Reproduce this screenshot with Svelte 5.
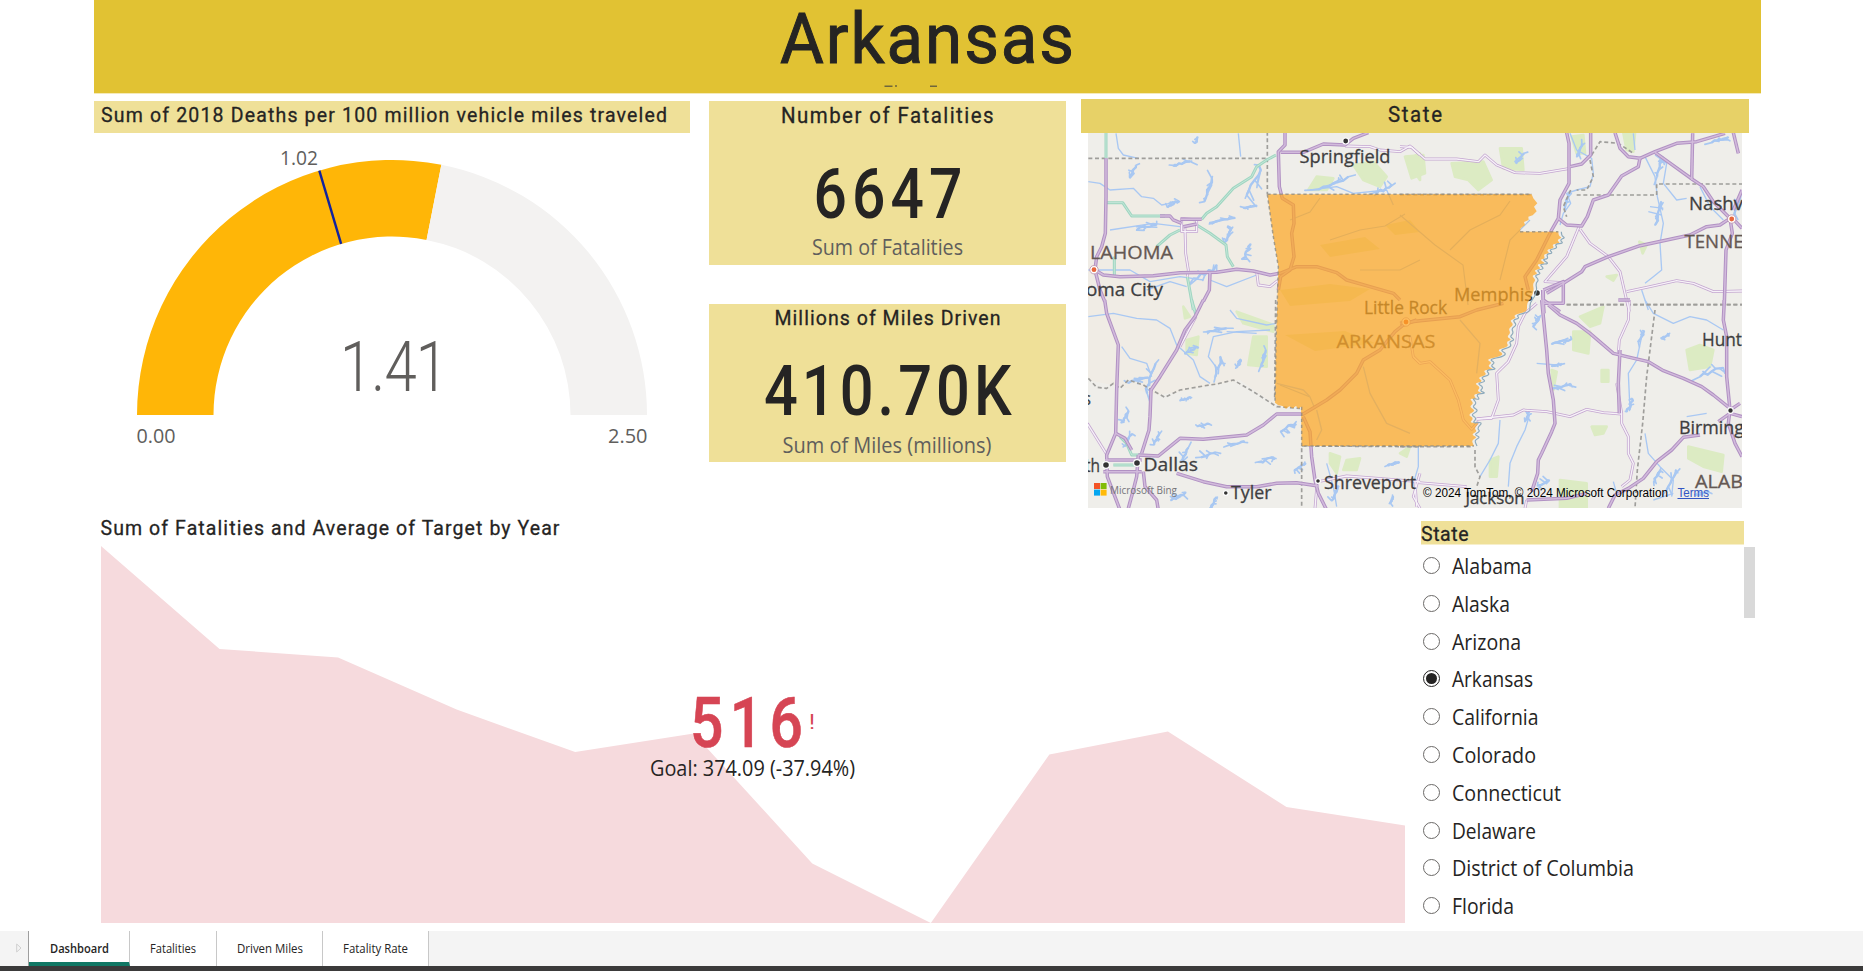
<script>
  const states = ['Alabama', 'Alaska', 'Arizona', 'Arkansas', 'California', 'Colorado', 'Connecticut', 'Delaware', 'District of Columbia', 'Florida'];
  const widths = [80, 58, 69, 81, 86.5, 84, 109, 84, 182, 62];
  let selected = $state('Arkansas');

  const tabs = [
    { name: 'Dashboard', w: 101, text: 59 },
    { name: 'Fatalities', w: 87, text: 46 },
    { name: 'Driven Miles', w: 106, text: 66 },
    { name: 'Fatality Rate', w: 106, text: 65 }
  ];
  let active = $state('Dashboard');

  // Gauge geometry
  const cx = 392, cy = 415, R = 255, r = 178.5;
  const polar = (v, rad) => {
    const a = Math.PI * (1 - v / 2.5);
    return [cx + rad * Math.cos(a), cy - rad * Math.sin(a)];
  };
  const arc = (a, b) =>
    `M${polar(a, R)} A${R} ${R} 0 0 1 ${polar(b, R)} L${polar(b, r)} A${r} ${r} 0 0 0 ${polar(a, r)}Z`;
  const t0 = polar(1.02, R), t1 = polar(1.02, r);

  // Trend area
  const ys = [546, 649, 657.5, 709.5, 752, 733.5, 863.5, 923, 754.5, 731.5, 807, 825.5];
  const area = 'M101 923 L' + ys.map((y, i) => `${101 + (i * 1304) / 11} ${y}`).join(' L') + ' L1405 923Z';

  // Map tiles: each holds its own strokes, in thirds of a pixel from its origin
  const tiles = [
    {
      x: 1070, y: 90,
      major: [
        'M108 205L108 320 106 430 95 470 80 500 75 540 90 600 104 634', 'M645 120L645 165 625 185 628 290 637 325 670 345 672 400 665 430 672 500 660 540 632 560 625 600',
        'M75 540L100 555 150 560 250 557 330 548 440 547 500 538 550 543 600 555 630 550 680 530 740 530 800 548 830 570 900 590 970 610 990 630',
        'M420 548L418 600 400 634', 'M632 187L700 187 760 162 825 165 850 145 895 128', 'M270 378L300 378 310 390 335 400', 'M332 388L395 388M340 410L380 402'
      ],
      minor: ['M345 415L347 490 355 540 352 560', 'M560 545L565 585 600 590 625 570', 'M825 168L900 170 930 180 990 185 1020 168 1050 195', 'M335 385L335 425 380 425 380 390Z'],
      teal: ['M108 125L108 205', 'M106 338L158 338 185 378 285 378', 'M395 388L410 370 440 350 490 295 545 260 560 230 590 210 618 195', 'M380 405L420 430 468 465 472 500 490 530', 'M330 420L300 435 260 470', 'M133 500L133 560', 'M352 560L370 660'],
      water: ['M138 130L145 175 160 195 205 205', 'M55 275L90 280 120 300 190 295 215 320 250 325 275 345 300 340', 'M505 130L512 200', 'M55 540L180 540 240 575 330 560 400 570', 'M720 300L800 290 850 310 950 300 970 345', 'M120 420L250 400 330 410', 'M420 570L470 590 560 555', 'M230 600L300 575 350 590'],
      border: ['M55 205L592 205M592 125L592 313'],
      green: ['M850 225L910 215 950 260 930 290 880 270Z', 'M740 260L790 265 770 300 715 300Z', 'M1010 210L1050 190 1050 270Z'],
      lakes: [[190, 245, 34, 38], [415, 300, 34, 70], [555, 270, 60, 90], [460, 390, 70, 30], [475, 435, 30, 45], [530, 485, 40, 45], [405, 550, 70, 60], [790, 280, 90, 50], [335, 220, 50, 22], [230, 410, 60, 26], [310, 340, 36, 28], [940, 300, 50, 40], [540, 350, 40, 14], [380, 150, 16, 18]]
    },
    {
      x: 1400, y: 90,
      major: [
        'M500 128L507 160 507 280 480 330 475 385 455 420 410 510 375 560 385 600', 'M475 385L500 405 545 408 562 380 580 330 625 315 665 258 715 230 720 205 685 200 660 175 645 128',
        'M720 205L765 185 830 160 890 155 975 130', 'M765 187L880 270 910 290 940 335 990 385', 'M878 130L875 270', 'M990 385L960 405 920 410 870 435 790 452 720 467 625 500 555 530 545 545 490 580 440 610',
        'M990 385L997 430 978 480 973 640', 'M572 128L572 195 545 222 510 230', 'M1000 128L1015 190', 'M430 600L490 575 490 640 430 640 430 600', 'M428 600L432 670', 'M430 630L480 665', 'M998 385L1026 415M1000 360L1026 300'
      ],
      minor: ['M0 170L35 172 75 207 170 207 235 215 255 195 290 225 345 248 420 250 510 235', 'M537 410L500 500 435 575 490 578', 'M540 418L570 460 625 500 660 545 675 610 688 665', 'M680 605L750 590 830 572 880 580 940 605 1026 603'],
      teal: [],
      water: ['M510 130L530 180 575 205 580 250 570 290 530 300 500 310 512 340 490 370 480 405', 'M735 200L765 260 772 320 790 400 780 460 785 540 760 560 735 580', 'M765 195L800 220 790 280 830 330 860 325', 'M900 290L930 350 970 390', 'M700 130L705 180', 'M750 350L790 355M745 365L785 375', 'M725 600L745 660'],
      border: ['M0 314L395 314', 'M530 315L770 315 770 282 1026 282', 'M500 644L1026 644', 'M575 195L600 155 655 160 700 190M570 210L580 260 560 300 530 300M512 300L490 350 500 380'],
      green: ['M155 220L250 215 275 270 235 300 205 270 165 260Z', 'M300 175L365 175 370 240 310 235Z', 'M15 200L70 195 75 250 35 265Z', 'M515 140L550 135 555 190 530 190Z', 'M670 128L705 128 700 185 680 180Z', 'M718 455L740 465 728 490Z', 'M620 560L650 555 640 572Z'],
      lakes: [[780, 230, 36, 60], [775, 370, 34, 70], [360, 205, 30, 30], [960, 150, 50, 20], [1010, 360, 30, 60], [540, 180, 24, 40], [500, 330, 24, 50]]
    },
    {
      x: 1070, y: 300,
      major: [
        'M104 0L110 40 145 135 140 270 137 400 110 465 112 530 150 630', 'M400 0L375 50 345 90 320 150 270 230 243 270 240 350 237 390 215 460', 'M137 400L165 415 185 450', 'M205 465L265 468 330 415 400 418 530 405 580 375 620 342 700 342 770 300 810 270 860 220 880 180 930 150 975 95 1000 75',
        'M700 350L720 395 725 470 735 540 745 580 770 630', 'M320 520L400 545 470 560 560 560 620 550 680 548 745 558', 'M100 515L215 515 M105 480L215 480', 'M205 465L200 530 190 570 175 625 M220 515L225 560 260 600 265 630', 'M1000 75L1040 60'
      ],
      minor: ['M52 370L108 460', 'M378 50L330 140', 'M740 565L735 625', 'M1050 520L1030 590 1050 625', 'M745 545L830 528 1050 545', 'M1020 110L1030 170 1050 190'],
      teal: ['M365 0L378 45', 'M130 495L195 495', 'M150 410L170 430 185 465 215 465'],
      water: ['M55 50L130 40 200 55 260 60 300 85 320 135 370 180 390 230 420 250', 'M155 140L180 175 230 190 245 230', 'M480 30L500 55 590 75 620 70', 'M600 90L500 95 430 110 415 170 445 210', 'M740 330L755 390 740 420', 'M880 200L900 280 950 370 1020 400', 'M620 250L700 270 720 290', 'M770 490L790 560 800 620', 'M560 100L470 95'],
      border: ['M55 235L80 262 110 265 130 250 150 265 175 240 220 255 245 270 285 292 330 270 400 258 440 252 490 240 550 275 620 320 690 325', 'M695 438L1050 440', 'M695 445L695 625', 'M617 0L614 300'],
      green: ['M500 35L610 75 610 95 520 70Z', 'M550 110L590 110 590 200 535 195Z', 'M350 120L385 110 380 165 350 160Z', 'M780 460L810 470 800 520 780 490Z', 'M830 480L870 475 860 510 820 510Z', 'M990 460L1020 440 1010 470Z', 'M340 20L360 50 345 55Z'],
      lakes: [[240, 235, 40, 90], [440, 90, 60, 16], [365, 150, 40, 30], [445, 200, 30, 60], [507, 190, 18, 24], [345, 297, 30, 16], [167, 350, 36, 36], [400, 375, 34, 16], [345, 463, 34, 40], [415, 465, 44, 36], [175, 420, 34, 36], [260, 418, 26, 34], [500, 430, 46, 16], [592, 478, 40, 28], [655, 380, 46, 36], [690, 500, 34, 26], [430, 610, 34, 36], [325, 590, 44, 32], [970, 490, 36, 16], [795, 580, 30, 44], [580, 175, 20, 50], [205, 240, 60, 24], [965, 600, 16, 20]]
    },
    {
      x: 1400, y: 300,
      major: [
        'M425 0L430 50 440 150 445 220 460 300 465 370 455 395 425 460 415 480 413 520 395 575', 'M445 15L480 45 530 70 570 100 640 160 680 170 745 185 790 212 850 235 905 260 940 285 990 325', 'M973 0L970 60 980 110 980 230 990 330 1020 310', 'M655 0L690 0', 'M660 150L655 250 658 340', 'M990 330L985 370 1005 430 1026 470', 'M900 405L850 412 815 450 770 485 730 535 685 565 645 585 625 625', 'M990 340L955 365M990 340L1026 350', 'M380 600L500 595 560 580', 'M0 70L60 62 180 50 230 30 310 10'
      ],
      minor: ['M410 10L375 40 355 80 350 130 325 185 290 220 295 300 275 355 230 357', 'M688 0L685 60 658 120 655 160', 'M230 357L340 345 370 330 440 335 510 350 560 328 610 338 665 342', 'M650 250L665 340 665 370 685 410 685 460 700 490 690 540 665 560', 'M40 170L60 190 90 185 150 240 175 300 190 360 215 388 235 365', 'M55 548L200 560M45 545L50 620', 'M380 600L375 625'],
      teal: [],
      water: ['M735 0L760 40 820 70 870 50 920 60 970 90', 'M725 110L710 180 685 220 690 330', 'M300 360L295 430 270 480 240 530', 'M390 340L375 390 350 440 330 490 325 560', 'M735 400L745 460 780 500 820 540 815 590', 'M180 60L240 130 230 220', 'M470 195L410 190', 'M920 340L860 350', 'M55 440L55 500 40 550', 'M640 545L650 580', 'M760 600L820 580'],
      border: ['M500 14L1026 14', 'M765 30L740 230 728 370 712 510 705 625', 'M0 440L215 440', 'M225 450L225 500 240 530 230 560'],
      green: ['M520 95L570 95 565 160 520 150Z', 'M540 50L610 20 600 70 570 80Z', 'M860 150L900 135 940 150 930 200 870 210Z', 'M865 440L970 465 965 515 910 500 865 475Z', 'M575 380L620 380 610 400 585 405Z', 'M270 480L295 470 290 530 270 530Z', 'M480 540L560 550 560 625 480 625Z', 'M605 210L625 210 625 245 605 245Z', 'M455 210L470 215 460 270Z'],
      lakes: [[485, 125, 60, 26], [485, 260, 54, 20], [410, 65, 30, 30], [725, 110, 24, 34], [690, 315, 30, 40], [935, 215, 70, 46], [470, 195, 30, 12], [430, 550, 36, 30], [795, 110, 24, 20], [815, 540, 40, 60], [910, 580, 34, 18], [770, 530, 34, 34], [380, 350, 24, 30]]
    }
  ];

  // A reservoir: a wandering spine with short side arms
  const lake = ([x, y, w, h]) => {
    let seed = x * 7 + y * 13;
    const rnd = () => {
      seed = (seed * 9301 + 49297) % 233280;
      return seed / 233280 - 0.5;
    };
    let d = '';
    let arms = '';
    for (let i = 0; i < 7; i++) {
      const f = i / 6 - 0.5;
      const px = w > h ? x + f * w : x - f * w * 0.6 + rnd() * w * 0.25;
      const py = w > h ? y - f * h * 0.6 + rnd() * h * 0.25 : y + f * h;
      d += (i ? 'L' : 'M') + px.toFixed(1) + ' ' + py.toFixed(1);
      arms += `M${px.toFixed(1)} ${py.toFixed(1)}l${(rnd() * w * 0.9).toFixed(1)} ${(rnd() * h * 0.9).toFixed(1)}`;
    }
    return [d, arms];
  };

  // Smooths small wiggles by running a curve through segment midpoints
  const wiggle = (pts) => {
    let d = '';
    for (let i = 0; i < pts.length - 1; i++) {
      const [a, b] = pts[i], [c, e] = pts[i + 1];
      d += `Q${a} ${b} ${(a + c) / 2} ${(b + e) / 2}`;
    }
    return d + 'L' + pts[pts.length - 1].join(' ');
  };

  const eastBank = [
    [395, 313], [400, 325], [412, 340], [402, 350], [410, 364], [398, 376], [385, 380], [386, 390], [372, 396], [375, 405], [362, 415], [360, 425],
    [475, 425], [475, 437], [487, 443], [470, 450], [482, 460], [455, 462], [464, 475], [438, 479], [450, 490], [430, 492], [436, 507], [417, 508], [440, 522], [408, 522], [425, 537], [400, 540], [415, 552], [394, 556], [408, 570], [398, 580], [402, 600], [395, 620], [380, 640],
    [382, 660], [372, 668], [340, 675], [350, 685], [328, 690], [342, 705], [325, 715], [332, 730], [320, 740], [336, 750], [318, 755], [327, 770], [290, 780], [310, 790], [300, 800], [258, 808], [277, 818], [262, 828], [282, 838], [248, 840], [262, 855], [232, 862], [250, 875], [222, 880], [242, 892], [230, 903], [250, 910], [218, 912], [232, 930], [207, 924], [222, 940], [207, 950], [228, 962], [203, 974], [222, 985], [207, 1000], [240, 996], [222, 1015], [232, 1024], [213, 1034], [233, 1042], [214, 1050], [222, 1068]
  ].map(([a, b]) => [a + 990, b]);
  const bootheel = eastBank.slice(0, 13).map((p) => p.join(' ')).join('L');
  const river = wiggle(eastBank.slice(13));
  const stateShape = 'M592 313L' + bootheel + river +
    'L695 1068L693 950L685 956L678 948L668 955L658 949L648 956L638 948L625 946L615 938L618 760L622 630L625 530L610 440Z';

  const places = [
    ['Springfield', 1299.5, 91, 163.3, 18.5], ['LAHOMA', 1090, 83, 259, 18.5, 'region'], ['oma City', 1086, 77, 295.7, 18.5],
    ['Nashv', 1689, 54, 210, 18.5], ['TENNE', 1684.5, 59, 248, 18.5, 'region'], ['Little Rock', 1364, 83, 314, 17.5],
    ['ARKANSAS', 1336.5, 99, 348, 18.5, 'region'], ['Memphis', 1454, 79, 301, 18.5], ['Dallas', 1143.5, 54.5, 471.2, 18.5],
    ['Tyler', 1231, 40.5, 499.2, 18.5], ['Shreveport', 1324, 92, 488.5, 18.5], ['th', 1085, 15, 472, 18.5],
    ['Hunt', 1702, 40, 345.7, 18.5], ['Birming', 1679, 65, 434, 18.5], ['ALAB', 1695, 48, 488, 18.5, 'region'],
    ['Jackson', 1465.5, 59, 504.3, 17], ['s', 1083, 8, 405, 18.5]
  ];
  const dots = [[1345.7, 141, 3], [1537, 293, 3.4], [1137, 463, 3.4], [1106, 465, 3.4], [1225.8, 493, 2.4], [1318, 481, 2.4], [1730.5, 410.5, 2.8]];
</script>

{#snippet label(text, x, w, y, size, cls)}
  <text {x} {y} textLength={w} lengthAdjust="spacingAndGlyphs" font-size={size} class={cls}>{text}</text>
{/snippet}

<!-- Narrow glyphs with open tracking, for headings and figures -->
{#snippet narrow(text, x, w, y, size, cls, k)}
  <text transform="translate({x} {y}) scale({k} 1)" textLength={w / k} lengthAdjust="spacing" font-size={size} class={cls}>{text}</text>
{/snippet}

{#snippet line(text, w, size, cls)}
  <svg class="line" width={w} height="26">{@render label(text, 0, w, 20, size, cls)}</svg>
{/snippet}

{#snippet heading(text, w, size)}
  <svg class="line" width={w} height="26">{@render narrow(text, 0, w, 20, size, 'din ink head', 0.93)}</svg>
{/snippet}

<div class="page">
  <main>
    <header>
      <svg width="1667" height="93" viewBox="94 0 1667 93">
        {@render narrow('Arkansas', 780, 294, 63, 70, 'din ink title', 0.96)}
        <path d="M884.5 86.3h8M895 86h2M930 86.3h7" stroke="#6f663c" stroke-width="1.4" />
      </svg>
    </header>

    <section class="top">
      <article class="gauge">
        <h2>{@render heading('Sum of 2018 Deaths per 100 million vehicle miles traveled', 566, 21)}</h2>
        <svg width="596" height="375" viewBox="94 133 596 375">
          <path d={arc(0, 1.405)} fill="#ffb607" />
          <path d={arc(1.405, 2.5)} fill="#f3f2f1" />
          <line x1={t0[0]} y1={t0[1]} x2={t1[0]} y2={t1[1]} stroke="#12239e" stroke-width="2.4" />
          {@render label('1.02', 280, 38, 165, 20.5, 'ui grey')}
          {@render label('0.00', 136.5, 39, 442.5, 20.5, 'ui grey')}
          {@render label('2.50', 608, 39.5, 442.5, 20.5, 'ui grey')}
          {@render narrow('1.41', 340, 108, 391, 70, 'din grey light', 0.83)}
        </svg>
      </article>

      <div class="cards">
        <article class="card">
          <svg width="357" height="164" viewBox="709 101 357 164">
            {@render narrow('Number of Fatalities', 781, 212.5, 122.7, 22, 'din ink head', 0.93)}
            {@render narrow('6647', 813.5, 149, 218, 70, 'din ink medium', 0.84)}
            {@render label('Sum of Fatalities', 812, 151, 255, 21, 'ui grey')}
          </svg>
        </article>
        <article class="card">
          <svg width="357" height="158" viewBox="709 304 357 158">
            {@render narrow('Millions of Miles Driven', 774.5, 226, 325, 21, 'din ink head', 0.93)}
            {@render narrow('410.70K', 764, 247.5, 415, 70, 'din ink medium', 0.85)}
            {@render label('Sum of Miles (millions)', 782.5, 209, 453, 21, 'ui grey')}
          </svg>
        </article>
      </div>

      <article class="map">
        <h2>{@render heading('State', 54, 22)}</h2>
        <svg class="canvas" width="654" height="375" viewBox="1088 133 654 375">
          <rect x="1088" y="133" width="654" height="375" fill="#efeeea" />
          <path d="M1088 160H1266L1278 300 1275 405 1240 380 1160 395 1088 380Z" fill="#f0ece5" />
          {#snippet layer(key, stroke, width, dash)}
            {#each tiles as t}
              <g transform="translate({t.x} {t.y}) scale(.33333)" fill="none" {stroke} stroke-width={width} stroke-dasharray={dash} stroke-linejoin="round">
                {#each t[key] as d}<path {d} />{/each}
              </g>
            {/each}
          {/snippet}
          {#each tiles as t}
            <g transform="translate({t.x} {t.y}) scale(.33333)">
              {#each t.green as d}<path {d} fill="#dcebc3" stroke="#dcebc3" stroke-width="8" stroke-linejoin="round" />{/each}
              {#each t.lakes as l}
                {@const [spine, arms] = lake(l)}
                <path d={spine} fill="none" stroke="#a6c6f2" stroke-width="7" stroke-linejoin="round" />
                <path d={arms} fill="none" stroke="#a9c8f2" stroke-width="5" stroke-linecap="round" />
              {/each}
            </g>
          {/each}
          <path d="M1280 290l50-6 40 5-20 12-60 5zM1285 335l60-4 30 12-60 8zM1320 245l45-8 15 12-50 8zM1385 225l25-5 10 12-25 3z" fill="#dfe5bf" />
          <path d="M1330 240l30-10 25-4 20-12M1290 220l20-8 10-14M1450 250l20-20 30-15 10-14M1400 215l35 30 28 20 5 40M1420 260l-20 10-40 0M1500 280l10-40 20-20M1280 385l30 12 5 12" fill="none" stroke="#a9c4e4" stroke-width="1.2" />
          {@render layer('water', '#a9c8f3', 4, '')}
          {@render layer('border', '#9f9e9b', 5, '12 8')}
          {@render layer('teal', '#9fd6c1', 9, '')}
          {@render layer('teal', '#c6e6da', 3, '')}
          {@render layer('minor', '#c3a5d0', 8.5, '')}
          {@render layer('minor', '#f7f2f8', 4, '')}
          {@render layer('major', '#b191c3', 10.5, '')}
          {@render layer('major', '#d2bbdc', 4.5, '')}

          {#each places as [name, x, w, y, size, kind]}
            {@render label(name, x, w, y, size, `place ${kind ?? ''}`)}
          {/each}
          {#each dots as [x, y, rad]}
            <circle cx={x} cy={y} r={rad} fill="#333" stroke="#fff" stroke-width="1.2" />
          {/each}
          {#each [[1094, 269.7], [1731.7, 219], [1406, 322]] as [x, y]}
            <circle cx={x} cy={y} r="4.2" fill="#fff" stroke="#b98fa8" stroke-width=".8" />
            <circle cx={x} cy={y} r="2.4" fill="#e8663c" />
          {/each}
          <path d={stateShape} transform="translate(1070 90) scale(.33333)" fill="#fda51f" fill-opacity=".7" />
          <path d="M592 313H1385M1350 425H1465M592 313L610 440 625 530 622 630 618 760 615 938M695 950V1068H1212" transform="translate(1070 90) scale(.33333)" fill="none" stroke="#948d80" stroke-opacity=".8" stroke-width="4.5" stroke-dasharray="10 8" />
          <path d={'M1465 425' + river} transform="translate(1073 90) scale(.33333)" fill="none" stroke="#8eaabb" stroke-width="3.5" />

          <path d="M1094 483h6v6h-6z" fill="#f35325" />
          <path d="M1100.6 483h6v6h-6z" fill="#81bc06" />
          <path d="M1094 489.6h6v6h-6z" fill="#05a6f0" />
          <path d="M1100.6 489.6h6v6h-6z" fill="#ffba08" />
          {@render label('Microsoft Bing', 1110, 67, 493.8, 11.5, 'bing')}
          {@render label('© 2024 TomTom, © 2024 Microsoft Corporation', 1423, 245, 496.7, 12, 'legal')}
          {@render label('Terms', 1677.5, 31.5, 496.7, 12, 'legal link')}
          <path d="M1677.5 498.5h31.5" stroke="#3456c4" />
        </svg>
      </article>
    </section>

    <section class="bottom">
      <svg width="1327" height="423" viewBox="94 508 1327 423">
        <path d={area} fill="#f6dadd" />
        {@render narrow('Sum of Fatalities and Average of Target by Year', 100.5, 459, 535, 21, 'din ink head', 0.93)}
        {@render narrow('516', 690, 113, 747, 70, 'din alert', 0.84)}
        {@render label('!', 809, 6, 729, 21, 'din alert thin')}
        {@render label('Goal: 374.09 (-37.94%)', 650, 205, 776, 21, 'ui ink')}
      </svg>
      <aside>
        <h3>{@render heading('State', 47.5, 21)}</h3>
        <div class="list">
          <ul>
            {#each states as s, i}
              <li>
                <button role="radio" aria-checked={s === selected} onclick={() => (selected = s)}>
                  <span class="radio" class:on={s === selected}></span>
                  {@render line(s, widths[i], 21, 'ui ink')}
                </button>
              </li>
            {/each}
          </ul>
          <div class="thumb"></div>
        </div>
      </aside>
    </section>
  </main>

  <nav>
    <div class="scroll">
      <svg width="6" height="10" viewBox="0 0 6 10"><path d="M.7 1v8l4.3-4z" fill="none" stroke="#cfcfcf" /></svg>
    </div>
    {#each tabs as t}
      <button class="tab" class:active={t.name === active} style="width:{t.w}px" onclick={() => (active = t.name)}>
        {@render line(t.name, t.text, 12, t.name === active ? 'ui ink bold' : 'ui ink')}
      </button>
    {/each}
  </nav>
  <footer></footer>
</div>

<style>
  :global(body) { margin: 0; background: #fff; overflow: hidden; }
  .page { width: 1863px; height: 971px; display: flex; flex-direction: column; font-family: 'Open Sans', sans-serif; }
  main { height: 931px; width: 1667px; margin-left: 94px; }
  svg { display: block; }
  h2, h3, ul { margin: 0; padding: 0; font-weight: 400; list-style: none; }
  button { border: 0; background: none; padding: 0; font: inherit; }
  header { height: 93px; background: #e1c233; box-shadow: 0 1px #f5eab9; }
  .line { overflow: visible; flex: none; }
  .din { font-family: Roboto, sans-serif; }
  .ui { font-family: 'Open Sans', sans-serif; }
  .ink { fill: #252423; }
  .grey { fill: #605e5c; }
  .alert { fill: #d64554; font-weight: 500; stroke: #d64554; stroke-width: 0.6px; }
  .thin { font-weight: 400; stroke: none; }
  .title { font-weight: 400; stroke: #252423; stroke-width: 1px; }
  .head { stroke: #252423; stroke-width: 0.3px; }
  .medium { font-weight: 500; }
  .light { font-weight: 300; }
  .bold { font-weight: 600; }

  .top { display: flex; height: 415px; }
  .gauge { width: 596px; margin-right: 19px; padding-top: 8px; }
  .gauge h2 { height: 32px; box-sizing: border-box; padding: 1px 6.5px; background: #efe098; }
  .cards { width: 357px; margin-right: 15px; padding-top: 8px; display: flex; flex-direction: column; gap: 39px; }
  .card { background: #efe098; }
  .map { width: 668px; padding-top: 6px; }
  .map h2 { height: 34px; background: #e7d167; display: flex; justify-content: center; box-sizing: border-box; padding: 2.5px 1px 0 0; }
  .canvas { margin-left: 7px; }
  .place { font-family: 'Open Sans', sans-serif; font-weight: 500; fill: #3e3e40; stroke: #3e3e40; stroke-width: 0.3px; }
  .region { fill: #655853; stroke: #655853; }
  .bing { font-family: 'Open Sans', sans-serif; font-weight: 500; fill: #75757a; }
  .legal { font-family: 'Liberation Sans', Arial, sans-serif; fill: #000; }
  .link { fill: #3456c4; }

  .bottom { display: flex; height: 423px; }
  aside { width: 334px; padding-top: 13px; }
  h3 { width: 323px; height: 23px; background: #efe098; box-shadow: 0 1px #f7efcb; }
  .list { display: flex; justify-content: space-between; padding-top: 3px; }
  li { height: 37.8px; }
  li button { display: flex; align-items: flex-start; gap: 12px; padding: 7px 0 0 2px; height: 37px; }
  .radio { width: 17px; height: 17px; box-sizing: border-box; border: 1px solid #6b6967; border-radius: 50%; margin-top: 3px; flex: none; display: grid; place-items: center; }
  .radio.on { border-color: #252423; }
  .radio.on::after { content: ''; width: 11px; height: 11px; border-radius: 50%; background: #252423; }
  .thumb { width: 11px; height: 71px; background: #d9d9d9; }

  nav { height: 35px; display: flex; background: #f4f4f4; }
  .scroll { width: 29px; box-sizing: border-box; border-right: 1px solid #9e9e9e; padding: 12px 0 0 16px; }
  .tab { box-sizing: border-box; height: 35px; background: #fff; border-right: 1px solid #c8c8c8; display: flex; justify-content: center; align-items: flex-start; padding-top: 2px; }
  .tab.active { border-bottom: 4px solid #117865; }
  footer { height: 5px; background: #3b3a3a; }
</style>
